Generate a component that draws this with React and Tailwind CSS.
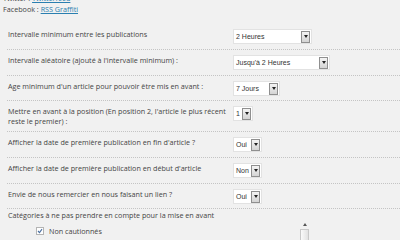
import React from "react";

const label = "font-['Open_Sans',sans-serif] text-[7.2px] text-[#444]";

function Select({ value, width }) {
  return (
    <div
      className={`flex items-center justify-between h-[15px] bg-white border border-[#e2e2e2] ${width}`}
    >
      <span className="pl-[2px] font-['Liberation_Sans',Arial,sans-serif] text-[7px] leading-[13px] text-[#333] whitespace-nowrap">
        {value}
      </span>
      <span className="flex items-center justify-center w-[9px] h-[12px] mr-[1px] border border-[#8f8f8f] bg-gradient-to-b from-[#f4f4f4] to-[#d4d4d4]">
        <span className="w-0 h-0 border-l-[2px] border-r-[2px] border-t-[3px] border-l-transparent border-r-transparent border-t-[#222]" />
      </span>
    </div>
  );
}

function Row({ text, children, tall, short }) {
  return (
    <div
      className={`flex items-start border-b border-dotted border-[#c4c4c4] pt-[5px] ${short ? "pb-[4px]" : "pb-[5px]"}`}
    >
      <div className={`w-[223px] pl-[1px] ${tall ? "leading-[10px]" : "leading-[11px]"} ${label}`}>
        {text}
      </div>
      <div className="ml-[3px]">{children}</div>
    </div>
  );
}

export default function App() {
  const rows = [
    { text: "Intervalle minimum entre les publications", value: "2 Heures", w: "w-[79px]" },
    { text: "Intervalle aléatoire (ajouté à l'intervalle minimum) :", value: "Jusqu'à 2 Heures", w: "w-[97px]" },
    { text: "Age minimum d'un article pour pouvoir être mis en avant :", value: "7 Jours", w: "w-[47px]", short: true },
    {
      text: "Mettre en avant à la position (En position 2, l'article le plus récent reste le premier) :",
      value: "1",
      w: "w-[20px]",
      tall: true,
    },
    { text: "Afficher la date de première publication en fin d'article ?", value: "Oui", w: "w-[29px]" },
    { text: "Afficher la date de première publication en début d'article", value: "Non", w: "w-[29px]" },
    { text: "Envie de nous remercier en nous faisant un lien ?", value: "Oui", w: "w-[29px]", short: true },
  ];

  return (
    <div className="w-[400px] h-[240px] overflow-hidden bg-[#f1f1f1]">
      <div className={`mt-[-7px] pl-[3px] leading-[11px] ${label}`}>
        <p>
          Twitter : <a className="text-[#2a7fb0] underline">Twitterfeed</a>
        </p>
        <p>
          Facebook : <a className="text-[#2a7fb0] underline">RSS Graffiti</a>
        </p>
      </div>

      <div className="ml-[7px] mt-[9px]">
        {rows.map((r) => (
          <Row key={r.text} text={r.text} tall={r.tall} short={r.short}>
            <Select value={r.value} width={r.w} />
          </Row>
        ))}
        <p className={`pl-[1px] pt-[1px] leading-[11px] ${label}`}>
          Catégories à ne pas prendre en compte pour la mise en avant
        </p>
        <div className="flex">
          <div className="w-[293px] pl-[29px] pt-[5px] flex items-center gap-[5px] self-start">
            <span className="flex items-center justify-center w-[8px] h-[8px] bg-white border border-[#b4b4b4]">
              <svg width="6" height="6" viewBox="0 0 6 6">
                <path d="M1 3 L2.5 4.6 L5 1.2" stroke="#4a6fa0" strokeWidth="1.1" fill="none" />
              </svg>
            </span>
            <span className={`leading-[10px] ${label}`}>Non cautionnés</span>
          </div>
          <div className="flex flex-col items-center w-[9px] pt-[2px]">
            <span className="w-0 h-0 border-l-[2px] border-r-[2px] border-b-[3px] border-l-transparent border-r-transparent border-b-[#555]" />
            <span className="mt-[3px] w-[9px] h-[12px] border border-[#c8c8c8] bg-gradient-to-r from-[#fafafa] to-[#e2e2e2]" />
          </div>
        </div>
      </div>
    </div>
  );
}
